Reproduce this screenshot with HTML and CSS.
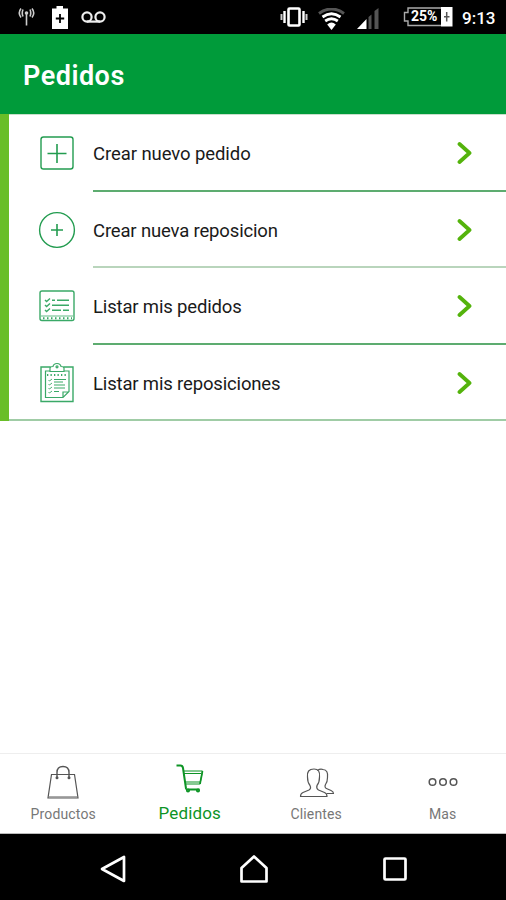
FILE: index.html
```html
<!DOCTYPE html>
<html lang="es">
<head>
<meta charset="utf-8">
<title>Pedidos</title>
<link rel="stylesheet" href="styles.css">
</head>
<body>
<div class="phone">
  <div class="status">
    <div class="status-left">
      <svg class="antenna" width="17" height="20" viewBox="0 0 17 20" fill="none" stroke="#ccc"><path d="M8.500 6V18.500" stroke-width="1.600"/><circle cx="8.500" cy="6" r="1.800" fill="#ccc" stroke="none"/><path d="M5 2.500Q3.500 6 5 9.500M12 2.500Q13.500 6 12 9.500M3 1.500Q-.5 6 3 10.500M14 1.500Q17.500 6 14 10.500" stroke-width="1.600"/></svg>
      <svg class="charge" width="16" height="23" viewBox="0 0 16 23"><path d="M0 2.500H4.500V0H11V2.500H16V23H0Z" fill="#fff"/><path d="M8 8V17M3.800 12.500H12.200" stroke="#000" stroke-width="1.800"/></svg>
      <svg width="25" height="12" viewBox="0 0 25 12" fill="none" stroke="#eee" stroke-width="2.200"><circle cx="6" cy="6" r="4.600"/><circle cx="19" cy="6" r="4.600"/><path d="M6 10.600H19"/></svg>
    </div>
    <div class="status-right">
      <svg class="vibrate" width="28" height="20" viewBox="0 0 28 20" fill="none" stroke="#fff"><rect x="8.500" y="1.500" width="11" height="17" rx="1" stroke-width="2.600"/><path d="M4.500 4V16M23.500 4V16" stroke-width="2.400"/><path d="M1.500 7V13M26.500 7V13" stroke-width="2" stroke="#ccc"/></svg>
      <svg class="wifi" width="27" height="22" viewBox="0 0 27 22" fill="none"><path d="M1 5.500Q13.500-3.500 26 5.500" stroke="#555" stroke-width="3"/><path d="M4.500 9Q13.500 2.500 22.500 9M7.200 13Q13.500 8.500 19.800 13" stroke="#fff" stroke-width="2.800"/><path d="M9.200 16.500Q13.500 12.500 17.800 16.500L13.500 22Z" fill="#fff"/></svg>
      <svg class="signal" width="22" height="21" viewBox="0 0 22 21"><path d="M0 21L9.500 11V21Z" fill="#fff"/><path d="M11.500 21V9L14.500 6.500V21ZM17.500 21V3L21.500 0V21Z" fill="#555"/></svg>
      <div class="battery">
        <svg width="50" height="20" viewBox="0 0 50 20"><path d="M38 1H5V5.500H1.500V14H5V18.500H38" fill="none" stroke="#aaa" stroke-width="1.400"/><rect x="38" y="0" width="11.500" height="19.500" fill="#fff"/><path d="M43.700 5V14.500M41 9.700H46.500" stroke="#555" stroke-width="1.500"/></svg>
        <span class="percent">25%</span>
      </div>
      <span class="clock">9:13</span>
    </div>
  </div>
  <header class="header"><h1>Pedidos</h1></header>
  <main class="content">
    <ul class="menu">
      <li class="row">
        <div class="icon"><svg width="38" height="42" viewBox="0 0 38 42" fill="none" stroke="#239c50" stroke-width="1.400"><rect x="3" y="5" width="32" height="32" rx="2.500"/><path d="M19 12V31M9.500 21.500H28.500" stroke-width="1.600"/></svg></div>
        <div class="body"><span class="label l1">Crear nuevo pedido</span><svg class="chevron" width="16" height="24" viewBox="0 0 16 24"><path d="M2.500 3L12.500 12L2.500 21"/></svg></div>
      </li>
      <li class="row pale">
        <div class="icon"><svg width="38" height="42" viewBox="0 0 38 42" fill="none" stroke="#239c50" stroke-width="1.400"><circle cx="19" cy="21" r="17.400"/><path d="M19 15V27M13 21H25" stroke-width="1.600"/></svg></div>
        <div class="body"><span class="label l2">Crear nueva reposicion</span><svg class="chevron" width="16" height="24" viewBox="0 0 16 24"><path d="M2.500 3L12.500 12L2.500 21"/></svg></div>
      </li>
      <li class="row">
        <div class="icon"><svg width="38" height="42" viewBox="0 0 38 42" fill="none" stroke="#3aa967" stroke-width="1.400"><rect x="2" y="6" width="34" height="29.500" rx="2"/><path d="M3 31H35" stroke-width=".8"/><path d="M5 33.200H34" stroke-width="2" stroke-dasharray="1.500 2.500"/><path d="M7 15l1.600 1.600 3.400-3M7 20l1.600 1.600 3.400-3M7 25l1.600 1.600 3.400-3" stroke-width="1.400"/><path d="M14 15.200H17M19 15.200H31M14 20.200H31M14 25.200H23M25 25.200H31" stroke-width="1.500"/></svg></div>
        <div class="body"><span class="label l3">Listar mis pedidos</span><svg class="chevron" width="16" height="24" viewBox="0 0 16 24"><path d="M2.500 3L12.500 12L2.500 21"/></svg></div>
      </li>
      <li class="row last">
        <div class="icon"><svg width="38" height="42" viewBox="0 0 38 42" fill="none" stroke="#3aa967" stroke-width="1.200"><path d="M12.500 5H3V39.500H35V5H25.500" stroke-width="1.400"/><path d="M12 9.500V6Q12 4.500 15 4.500Q15.500 1.500 19 1.500T23 4.500Q26 4.500 26 6V9.500Z"/><circle cx="19" cy="4.800" r="1"/><path d="M12 9H7.500V35.500H25L31 29.500V9H26M25 35.500V30H31"/><path d="M9 13H30" stroke-width="2.200" stroke-dasharray="1.300 2.200"/><path d="M10.500 18l1 1 2.500-2M10.500 22l1 1 2.500-2M10.500 26l1 1 2.500-2M10.500 30l1 1 2.500-2" stroke-width=".9"/><path d="M16 17.500H28M16 20H25M16 23H27M16 26H27M16 29.500H21" stroke-width="1.200"/></svg></div>
        <div class="body"><span class="label l4">Listar mis reposiciones</span><svg class="chevron" width="16" height="24" viewBox="0 0 16 24"><path d="M2.500 3L12.500 12L2.500 21"/></svg></div>
      </li>
    </ul>
  </main>
  <nav class="tabs">
    <div class="tab">
      <svg width="34" height="36" viewBox="0 0 34 36" fill="none" stroke="#555" stroke-width="1.200"><path d="M5.500 10.500H28.500L32 34H2Z"/><path d="M3 32.800H31" stroke-width=".7"/><path d="M11 14V8.500Q11 2.500 17 2.500T23 8.500V14" stroke-width="1.400"/><circle cx="11" cy="13.800" r=".9" fill="#555"/><circle cx="23" cy="13.800" r=".9" fill="#555"/></svg>
      <span class="t1">Productos</span>
    </div>
    <div class="tab active">
      <svg width="30" height="32" viewBox="0 0 30 32" fill="none" stroke="#0d9425" stroke-width="1.700" stroke-linejoin="round"><path d="M1.500 3.500H5.500Q7.500 3.500 8 6L11 26.500Q11.200 27.500 13 27.500H24.500" stroke-width="2"/><path d="M8.500 9H27.500L25 22H11M9 11.500H26M11 20H25" stroke-width="1"/><path d="M27.500 9L25 22"/><circle cx="13" cy="28.500" r="1.200"/><circle cx="23" cy="28.500" r="1.200"/></svg>
      <span class="t2">Pedidos</span>
    </div>
    <div class="tab">
      <svg class="people" width="36" height="34" viewBox="0 0 36 34" fill="none" stroke="#555" stroke-width="1.200" stroke-linejoin="round"><path d="M1.500 31.500Q1.500 28.500 4 27.500L10 25Q12.500 23.500 11 20.500Q8.500 17.500 8.500 12Q7.500 4 15 4Q21.500 4 20.500 12Q20.500 17.500 18 20.500Q17 23.500 19.500 25L25.500 27.500Q28 28.500 28 31.500Z"/><path d="M18.500 5.500Q21 3.500 24 4.500Q29.500 5 28.500 12.500Q28.500 17 26.500 19.500Q25 22.500 28 23.800L32 25.500Q34.500 26.500 34.500 28.500H27.500"/></svg>
      <span class="t3">Clientes</span>
    </div>
    <div class="tab">
      <svg class="more" width="32" height="32" viewBox="0 0 32 32" fill="none" stroke="#555" stroke-width="1.500"><circle cx="5.500" cy="16" r="3.300"/><circle cx="16" cy="16" r="3.300"/><circle cx="26.500" cy="16" r="3.300"/></svg>
      <span class="t4">Mas</span>
    </div>
  </nav>
  <div class="system">
    <svg width="28" height="30" viewBox="0 0 28 30"><path d="M25 3V27L3 15Z"/></svg>
    <svg width="30" height="30" viewBox="0 0 30 30"><path d="M15 2.500L27.500 14V27.500H2.500V14Z"/></svg>
    <svg width="28" height="30" viewBox="0 0 28 30"><rect x="3.500" y="4.500" width="21" height="21" rx="1"/></svg>
  </div>
</div>
</body>
</html>
```

FILE: styles.css
```css
* { box-sizing: border-box; }
body { margin: 0; font-family: Roboto, "Liberation Sans", sans-serif; background: #fff; }
svg { display: block; flex: none; }
.phone { width: 506px; height: 900px; display: flex; flex-direction: column; overflow: hidden; }
.status { height: 34px; background: #000; display: flex; justify-content: space-between; padding: 0 11px 0 18px; color: #fff; flex: none; }
.status-left, .status-right { display: flex; align-items: center; }
.antenna { margin-right: 17px; }
.charge { margin-right: 13px; }
.vibrate { margin-right: 10px; }
.wifi { margin: 3px 12px 0 0; }
.signal { margin: 3px 24px 0 0; }
.battery { position: relative; margin-right: 9px; }
.percent { position: absolute; left: 8px; top: 1px; font-size: 14px; line-height: 17px; font-weight: 700; }
.clock { font-size: 17px; font-weight: 500; width: 33px; white-space: nowrap; margin-top: 1px; }
.header { height: 80px; background: #009b3a; display: flex; align-items: center; padding: 4px 23px 0; flex: none; }
.header h1 { margin: 0; color: #fff; font-size: 27px; font-weight: 600; letter-spacing: .5px; }
.content { flex: 1; }
.menu { list-style: none; margin: 0; padding: 1px 0 0; border-left: 9px solid #69be28; box-shadow: inset 0 1px #c8dfcb; }
.row { height: 76.600px; display: flex; }
.icon { width: 84px; padding: 17px 0 0 28.500px; }
.body { flex: 1; display: flex; align-items: center; justify-content: space-between; padding: 2px 33px 0 0; border-bottom: 2px solid #5dac70; }
.pale .body { border-color: #b9d5bc; }
.last { border-bottom: 2px solid #a0cca6; }
.last .body { border: 0; }
.label { font-size: 18.500px; letter-spacing: -.08px; padding-top: 2px; color: #1a1a1a; white-space: nowrap; }
.l2, .l3, .l4 { letter-spacing: -.16px; }
.chevron { fill: none; stroke: #54b30c; stroke-width: 3.800; stroke-linecap: round; stroke-linejoin: round; }
.tabs { height: 81px; border-top: 1.500px solid #eee; border-bottom: 1px solid #bbb; display: flex; flex: none; }
.tab { flex: 1; display: flex; flex-direction: column; align-items: center; padding-top: 10px; color: #777; font-size: 14px; letter-spacing: .15px; }
.tab span { margin-top: auto; margin-bottom: 10px; line-height: 18px; }
.tab.active { color: #0d9425; font-size: 17px; padding-top: 8px; }
.tab.active span { margin-bottom: 11px; }
.people { margin: 1px 0 0 2px; }
.more { margin: 2px 0 0 1px; }
.system { height: 66px; background: #000; display: flex; justify-content: center; align-items: center; gap: 112px; padding: 4px 0 0 1px; flex: none; }
.system path, .system rect { fill: none; stroke: #fff; stroke-width: 2.700; stroke-linejoin: round; }
```
